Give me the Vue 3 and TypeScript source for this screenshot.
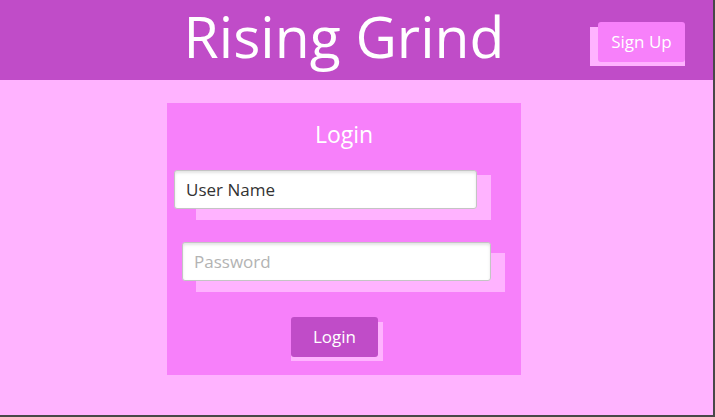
<script setup lang="ts">
import { ref } from 'vue'

const userName = ref<string>('User Name')
const password = ref<string>('')
</script>

<template>
  <div class="page">
    <header class="header">
      <h1 class="title">Rising Grind</h1>
      <div class="plate plate-signup">
        <button type="button" class="button button-signup">Sign Up</button>
      </div>
    </header>
    <main class="content">
      <form class="card" @submit.prevent>
        <h2 class="heading">Login</h2>
        <div class="plate plate-user">
          <input v-model="userName" class="input" type="text" aria-label="User Name" />
        </div>
        <div class="plate plate-password">
          <input v-model="password" class="input" type="password" placeholder="Password" aria-label="Password" />
        </div>
        <div class="plate plate-login">
          <button type="submit" class="button button-login">Login</button>
        </div>
      </form>
    </main>
  </div>
</template>

<style>
body {
  margin: 0;
}
</style>

<style scoped>
.page {
  box-sizing: border-box;
  min-height: 100vh;
  border-right: 2px solid #484848;
  border-bottom: 2px solid #484848;
  background: #ffb3ff;
  color: #fff;
  font-family: "Open Sans", "Noto Sans", sans-serif;
  font-size: 17px;
}

.header {
  display: grid;
  height: 80px;
  padding: 0 28px 0 3px;
  background: #c04cc8;
}

.title {
  grid-area: 1 / 1;
  justify-self: center;
  margin: 0;
  font-size: 57px;
  font-weight: 400;
  line-height: 72px;
}

.content {
  display: flex;
  justify-content: center;
  padding: 23px 28px 40px 3px;
}

.card {
  box-sizing: border-box;
  display: flex;
  flex-direction: column;
  width: min(354px, 100%);
  padding: 16px 7px 14px;
  background: #f780fa;
}

.heading {
  margin: 0 0 21px;
  font-size: 23px;
  font-weight: 400;
  line-height: 30px;
  text-align: center;
}

/* A control with a flat, lighter plate offset behind it. */
.plate {
  display: grid;
}

.plate::before {
  content: "";
  grid-area: 1 / 1;
  background: #ffb3ff;
}

.plate > * {
  grid-area: 1 / 1;
}

.plate-signup {
  grid-area: 1 / 1;
  place-self: start end;
  margin-top: 22px;
}

.plate-signup::before,
.plate-login::before {
  margin-top: 5px;
}

.plate-user {
  margin: 0 23px 22px 0;
}

.plate-user::before {
  margin: 5px 0 0 22px;
}

.plate-password {
  margin: 0 9px 25px 8px;
}

.plate-password::before {
  margin: 11px 0 0 14px;
}

.plate-login {
  align-self: center;
  margin-right: 14px;
}

.input {
  box-sizing: border-box;
  min-width: 0;
  height: 39px;
  margin: 0 14px 11px 0;
  padding: 0 11px;
  border: 1px solid #c4c4c4;
  border-radius: 3px;
  background: #fff;
  box-shadow: inset 0 2px 3px #e4e4e4;
  color: #333;
  font: inherit;
}

.input::placeholder {
  color: #b3b3b3;
  opacity: 1;
}

.button {
  height: 40px;
  padding: 0 0 2px;
  border: 0;
  border-radius: 3px;
  color: #fff;
  font: inherit;
}

.button-signup {
  width: 87px;
  margin: 0 0 4px 8px;
  background: #f780fa;
}

.button-login {
  width: 87px;
  margin: 0 5px 4px 0;
  background: #c04cc8;
}
</style>
